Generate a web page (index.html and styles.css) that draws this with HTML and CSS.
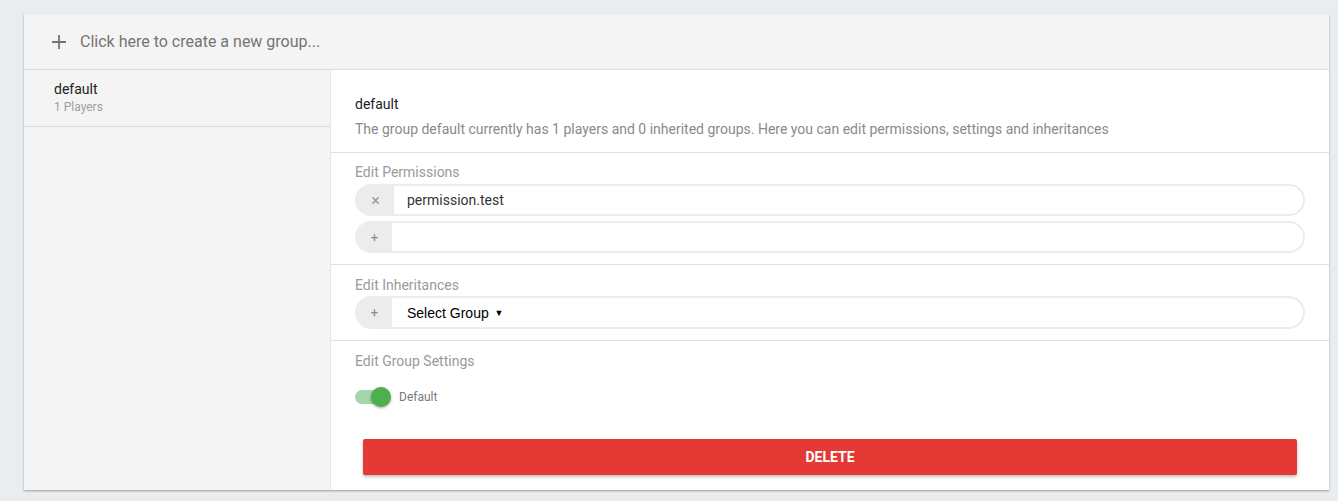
FILE: index.html
```html
<!DOCTYPE html>
<html>
<head>
<meta charset="utf-8">
<link rel="stylesheet" href="styles.css">
</head>
<body>
<div class="card">
  <div class="card-header">
    <svg class="plus-icon" width="14" height="14" viewBox="0 0 14 14"><path d="M7 0v14M0 7h14" stroke="#757575" stroke-width="1.8" fill="none"/></svg>
    <span class="create-text">Click here to create a new group...</span>
  </div>
  <div class="card-body">
    <aside class="sidebar">
      <div class="group-item">
        <div class="group-name">default</div>
        <div class="group-count">1 Players</div>
      </div>
    </aside>
    <main class="main">
      <section class="section intro">
        <div class="title">default</div>
        <div class="desc">The group default currently has 1 players and 0 inherited groups. Here you can edit permissions, settings and inheritances</div>
      </section>
      <section class="section perms">
        <div class="label">Edit Permissions</div>
        <div class="pill">
          <span class="addon addon-x">×</span>
          <span class="pill-text">permission.test</span>
        </div>
        <div class="pill">
          <span class="addon">+</span>
          <span class="pill-text"></span>
        </div>
      </section>
      <section class="section inher">
        <div class="label">Edit Inheritances</div>
        <div class="pill pill-select">
          <span class="addon">+</span>
          <span class="select-text">Select Group <span class="caret">▼</span></span>
        </div>
      </section>
      <section class="section settings">
        <div class="label">Edit Group Settings</div>
        <div class="toggle-row">
          <span class="switch"><span class="track"></span><span class="thumb"></span></span>
          <span class="toggle-label">Default</span>
        </div>
        <button class="delete-btn">DELETE</button>
      </section>
    </main>
  </div>
</div>
</body>
</html>
```

FILE: styles.css
```css
* { box-sizing: border-box; }
html, body { margin: 0; padding: 0; }
body {
  background: #e9edf0;
  font-family: Roboto, "Liberation Sans", Arial, sans-serif;
  padding: 14px 9px 0 24px;
  height: 501px;
  overflow: hidden;
}
.card {
  background: #fff;
  box-shadow: 0 1px 2px rgba(0,0,0,0.35);
  height: 476px;
  display: flex;
  flex-direction: column;
}
.card-header {
  height: 56px;
  background: #f4f4f4;
  border-bottom: 1px solid #dcdcdc;
  display: flex;
  align-items: center;
  padding-left: 28px;
  gap: 14px;
}
.plus-icon { display: block; }
.create-text {
  font-size: 16px;
  color: #757575;
}
.card-body {
  flex: 1;
  display: flex;
  min-height: 0;
}
.sidebar {
  width: 307px;
  background: #f4f4f4;
  border-right: 1px solid #e6e6e6;
}
.group-item {
  padding: 9px 30px 11px;
  border-bottom: 1px solid #dcdcdc;
}
.group-name {
  font-size: 14px;
  line-height: 20px;
  color: #212121;
}
.group-count {
  font-size: 12px;
  line-height: 16px;
  color: #9e9e9e;
}
.main {
  flex: 1;
  display: flex;
  flex-direction: column;
}
.section {
  padding: 0 24px;
  border-bottom: 1px solid #e0e0e0;
}
.section:last-child { border-bottom: none; }
.intro { padding-top: 24px; padding-bottom: 13px; }
.title {
  font-size: 14px;
  line-height: 20px;
  color: #212121;
}
.desc {
  font-size: 14px;
  line-height: 20px;
  margin-top: 5px;
  color: #8a8a8a;
}
.label {
  font-size: 14px;
  line-height: 20px;
  color: #9a9a9a;
}
.perms { padding-top: 9px; padding-bottom: 11px; }
.perms .label { margin-bottom: 2px; }
.inher { padding-top: 10px; padding-bottom: 11px; }
.inher .label { margin-bottom: 1px; }
.pill {
  height: 32px;
  border: 2px solid #ececec;
  border-radius: 16px;
  display: flex;
  align-items: center;
  overflow: hidden;
  margin-bottom: 5px;
}
.pill:last-child { margin-bottom: 0; }
.pill-select { height: 33px; border-radius: 17px; }
.addon {
  align-self: stretch;
  background: #ececec;
  width: 35px;
  display: flex;
  align-items: center;
  justify-content: center;
  font-size: 13px;
  color: #888;
}
.addon-x { width: 37px; font-size: 16px; color: #999; }
.pill-text {
  padding-left: 13px;
  font-size: 14px;
  color: #333;
}
.select-text {
  padding-left: 15px;
  font-family: "Liberation Sans", Arial, sans-serif;
  font-size: 14px;
  color: #000;
}
.caret { font-size: 9px; margin-left: 2px; position: relative; top: -2px; }
.settings { padding-top: 10px; flex: 1; }
.toggle-row {
  display: flex;
  align-items: center;
  margin-top: 16px;
  height: 20px;
}
.switch {
  position: relative;
  width: 36px;
  height: 20px;
  display: inline-block;
}
.track {
  position: absolute;
  left: 0;
  top: 3px;
  width: 34px;
  height: 14px;
  border-radius: 7px;
  background: #a5d6a7;
}
.thumb {
  position: absolute;
  left: 16px;
  top: 0;
  width: 20px;
  height: 20px;
  border-radius: 50%;
  background: #4caf50;
  box-shadow: 0 1px 3px rgba(0,0,0,0.35);
}
.toggle-label {
  margin-left: 8px;
  font-size: 12px;
  color: #777;
}
.delete-btn {
  display: block;
  width: calc(100% - 16px);
  margin: 32px 8px 0;
  height: 36px;
  border: none;
  border-radius: 2px;
  background: #e53935;
  color: #fff;
  font-family: Roboto, "Liberation Sans", Arial, sans-serif;
  font-weight: 700;
  font-size: 14px;
  box-shadow: 0 2px 3px rgba(0,0,0,0.25);
}
```
